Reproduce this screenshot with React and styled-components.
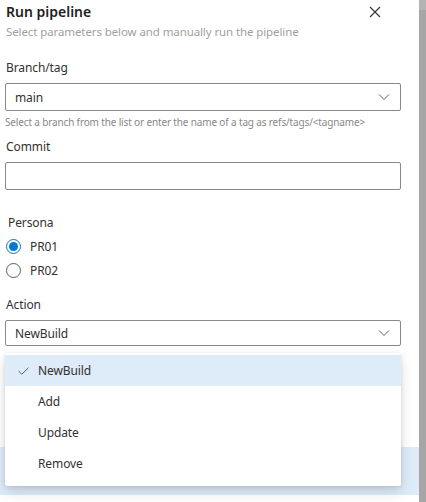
import React from "react";
import styled, { createGlobalStyle } from "styled-components";

const GlobalStyle = createGlobalStyle`
  html, body {
    margin: 0;
    padding: 0;
    background: #fff;
    overflow: hidden;
  }
  body {
    font-family: "Noto Sans", "Open Sans", "Liberation Sans", sans-serif;
    color: #323130;
  }
`;

const Page = styled.div`
  display: flex;
  width: 426px;
  height: 502px;
`;

const Panel = styled.div`
  flex: 1;
  display: flex;
  flex-direction: column;
  padding-top: 2px;
`;

const Scrollbar = styled.div`
  width: 7px;
  background: #a6a6a6;
  border-top: 10px solid #b4b4b4;
  box-sizing: border-box;
`;

const Header = styled.div`
  display: flex;
  justify-content: space-between;
  align-items: flex-start;
  padding: 0 38px 0 6px;
`;

const Title = styled.h1`
  margin: 0;
  font-size: 14px;
  line-height: 20px;
  font-weight: 600;
  color: #201f1e;
`;

const CloseButton = styled.button`
  border: none;
  background: none;
  padding: 0;
  margin-top: 4px;
  width: 12px;
  height: 12px;
  display: flex;
  cursor: pointer;
`;

const Subtitle = styled.p`
  margin: 2px 0 0 6px;
  font-size: 11.5px;
  letter-spacing: -0.1px;
  line-height: 16px;
  color: #a19f9d;
`;

const Form = styled.div`
  display: flex;
  flex-direction: column;
  padding: 0 18px 0 5px;
`;

const Field = styled.div`
  position: relative;
  display: flex;
  flex-direction: column;
  margin-top: ${(p) => p.$top}px;
`;

const Label = styled.label`
  font-size: 12px;
  letter-spacing: -0.1px;
  line-height: 16px;
  margin: 0 0 7px ${(p) => p.$indent || 1}px;
  color: #323130;
`;

const Box = styled.div`
  height: ${(p) => p.$h || 28}px;
  box-sizing: border-box;
  border: 1px solid #8a8886;
  border-radius: 2px;
  display: flex;
  align-items: center;
  justify-content: space-between;
  padding: 0 10px 0 9px;
  font-size: 12px;
  letter-spacing: -0.1px;
  color: #323130;
  background: #fff;
`;

const Helper = styled.div`
  font-size: 10px;
  letter-spacing: -0.15px;
  line-height: 14px;
  margin-top: 4px;
  color: #8a8886;
  white-space: nowrap;
`;

const RadioGroup = styled.div`
  display: flex;
  flex-direction: column;
  margin-left: 1px;
  margin-top: -4px;
`;

const RadioRow = styled.div`
  display: flex;
  align-items: center;
  height: 24px;
  font-size: 12px;
  letter-spacing: -0.1px;
  color: #323130;
`;

const RadioCircle = styled.span`
  width: 15px;
  height: 15px;
  border-radius: 50%;
  box-sizing: border-box;
  border: 1px solid ${(p) => (p.$checked ? "#0078d4" : "#605e5c")};
  display: flex;
  align-items: center;
  justify-content: center;
  margin-right: 9px;
  &::after {
    content: "";
    width: 9px;
    height: 9px;
    border-radius: 50%;
    background: ${(p) => (p.$checked ? "#0078d4" : "transparent")};
  }
`;

const Menu = styled.div`
  position: absolute;
  left: 0;
  right: 0;
  top: 56px;
  background: #fff;
  border-radius: 2px;
  box-shadow: 0 6px 14px rgba(0, 0, 0, 0.13), 0 1px 4px rgba(0, 0, 0, 0.11);
  padding: 2px 0 7px;
  z-index: 2;
`;

const MenuItem = styled.div`
  display: flex;
  align-items: center;
  height: 31px;
  padding-left: 13px;
  font-size: 12px;
  letter-spacing: -0.1px;
  color: #323130;
  background: ${(p) => (p.$selected ? "#deecf9" : "transparent")};
`;

const CheckSlot = styled.span`
  width: 20px;
  display: flex;
  align-items: center;
`;

const Footer = styled.div`
  margin-top: 101px;
  height: 48px;
  background: #deecf9;
`;

const Chevron = () => (
  <svg width="12" height="8" viewBox="0 0 12 8">
    <path d="M1 1.5 L6 6.5 L11 1.5" fill="none" stroke="#605e5c" strokeWidth="1" />
  </svg>
);

const Check = () => (
  <svg width="11" height="8" viewBox="0 0 11 8">
    <path d="M0.5 4 L3.8 7.2 L10.5 0.8" fill="none" stroke="#605e5c" strokeWidth="1" />
  </svg>
);

const CloseIcon = () => (
  <svg width="12" height="12" viewBox="0 0 12 12">
    <path d="M1 1 L11 11 M11 1 L1 11" fill="none" stroke="#323130" strokeWidth="1.1" />
  </svg>
);

const actions = ["NewBuild", "Add", "Update", "Remove"];

export default function App() {
  return (
    <>
      <GlobalStyle />
      <Page>
        <Panel>
          <Header>
            <Title>Run pipeline</Title>
            <CloseButton aria-label="Close">
              <CloseIcon />
            </CloseButton>
          </Header>
          <Subtitle>Select parameters below and manually run the pipeline</Subtitle>
          <Form>
            <Field $top={20}>
              <Label>Branch/tag</Label>
              <Box>
                <span>main</span>
                <Chevron />
              </Box>
              <Helper>Select a branch from the list or enter the name of a tag as refs/tags/&lt;tagname&gt;</Helper>
            </Field>
            <Field $top={10}>
              <Label>Commit</Label>
              <Box />
            </Field>
            <Field $top={25}>
              <Label $indent={3}>Persona</Label>
              <RadioGroup>
                <RadioRow>
                  <RadioCircle $checked />
                  PR01
                </RadioRow>
                <RadioRow>
                  <RadioCircle />
                  PR02
                </RadioRow>
              </RadioGroup>
            </Field>
            <Field $top={15}>
              <Label $indent={0}>Action</Label>
              <Box $h={26}>
                <span>NewBuild</span>
                <Chevron />
              </Box>
              <Menu>
                {actions.map((a, i) => (
                  <MenuItem key={a} $selected={i === 0}>
                    <CheckSlot>{i === 0 && <Check />}</CheckSlot>
                    {a}
                  </MenuItem>
                ))}
              </Menu>
            </Field>
          </Form>
          <Footer />
        </Panel>
        <Scrollbar />
      </Page>
    </>
  );
}
